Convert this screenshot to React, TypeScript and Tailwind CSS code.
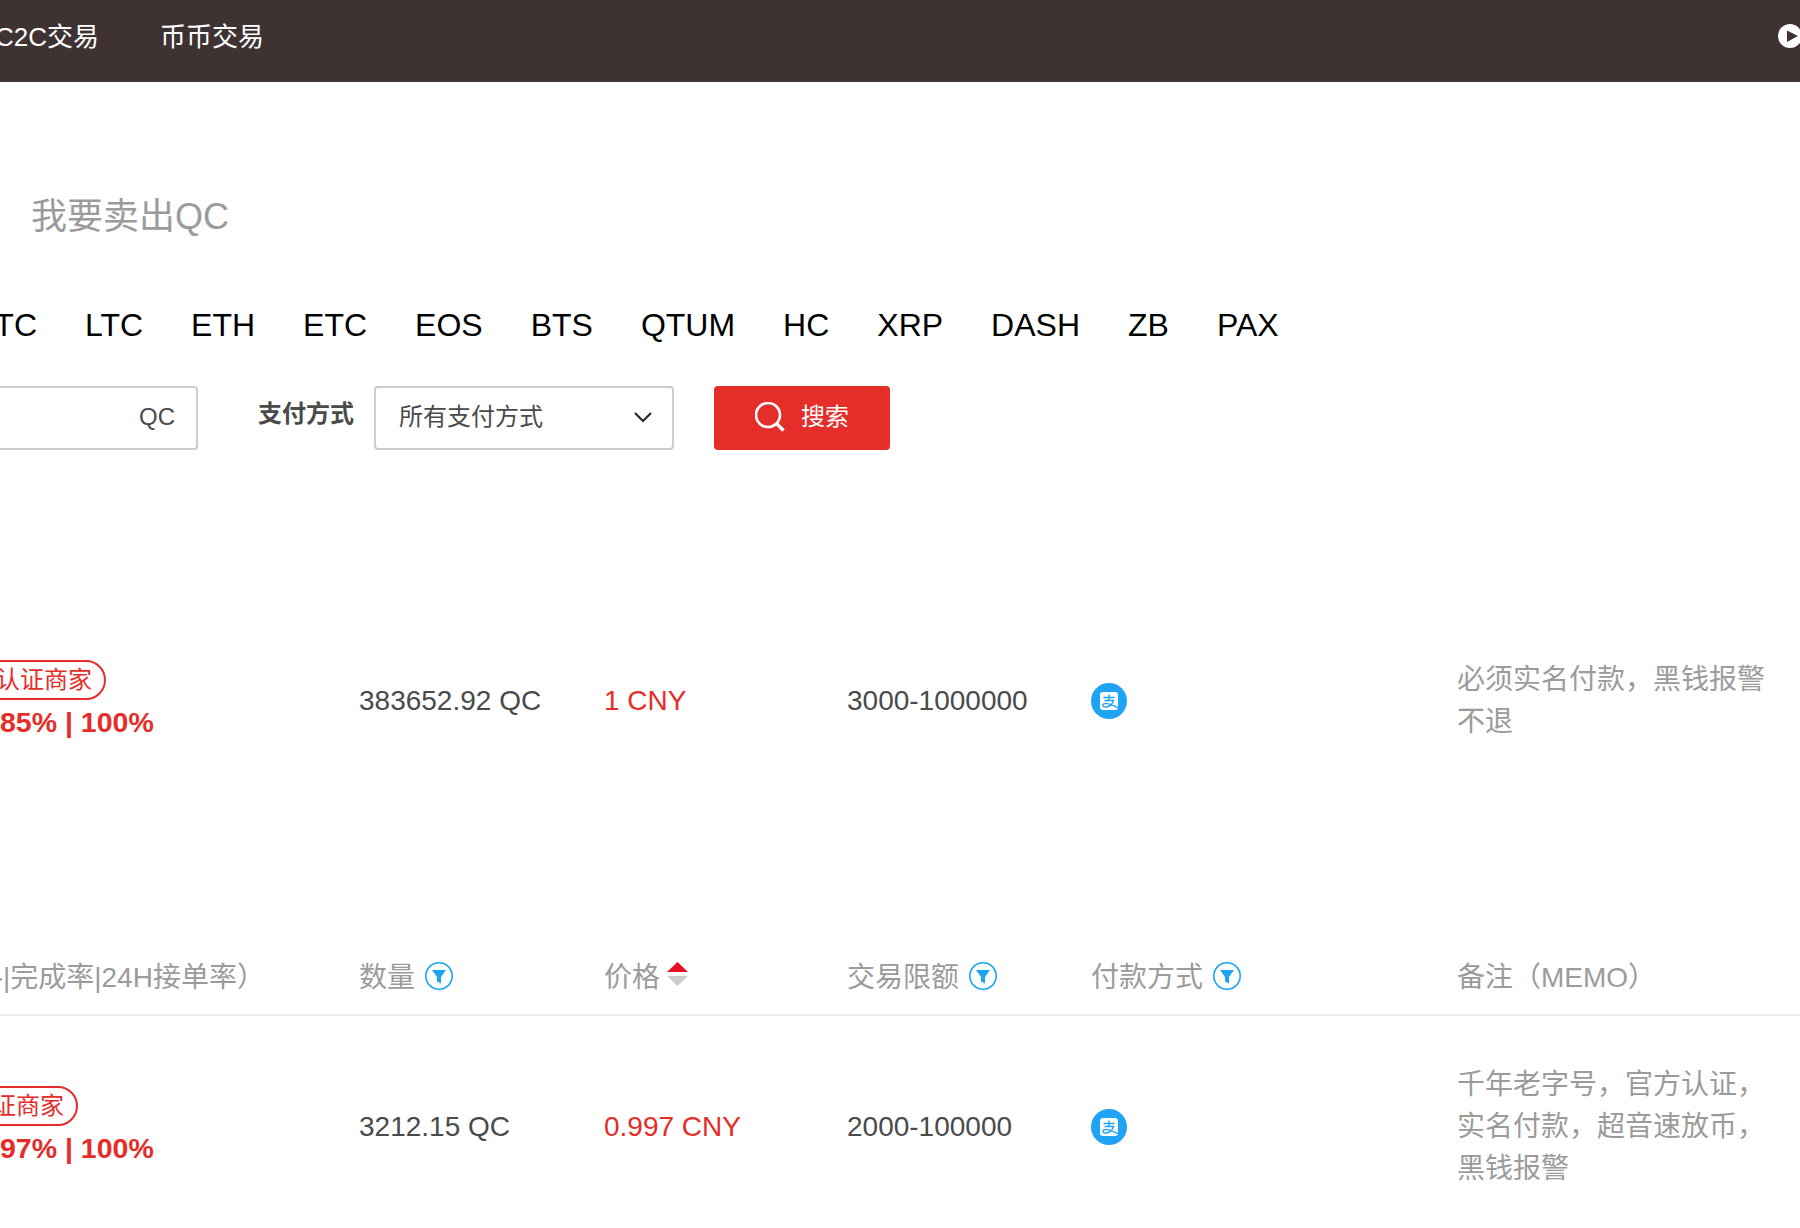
const COINS = ["BTC", "LTC", "ETH", "ETC", "EOS", "BTS", "QTUM", "HC", "XRP", "DASH", "ZB", "PAX"];

const ROW_GRID = "grid grid-cols-[419px_245px_243px_244px_366px_1fr] items-center";

const FilterIcon = () => (
  <svg width="30" height="30" viewBox="0 0 30 30" fill="none" className="shrink-0 -ml-px">
    <circle cx="15" cy="15" r="13.2" stroke="#1fa3f5" strokeWidth="1.6" />
    <path d="M8 9h14l-5 7v6.5l-4-2V16z" fill="#1fa3f5" />
  </svg>
);

const SortIcon = () => (
  <svg width="21" height="25" viewBox="0 0 21 25" className="shrink-0 -ml-px -mt-[3px]">
    <path d="M10.5 0L21 10H0z" fill="#e81123" />
    <path d="M0 14h21L10.5 24z" fill="#cccccc" />
  </svg>
);

const AlipayBadge = () => (
  <svg width="36" height="36" viewBox="0 0 36 36" fill="none">
    <circle cx="18" cy="18" r="18" fill="#1fa3f5" />
    <rect x="9" y="9" width="18" height="18" rx="3" fill="#ffffff" />
    <path d="M12.5 14.5h11M18 11.5v6M13.5 17.5h9c-1 3-4 6-7 6.5-3 .4-4-1-3.5-2.4.6-1.6 5-2.2 15.500 3.400" stroke="#1fa3f5" strokeWidth="1.4" />
  </svg>
);

const Stats: React.FC<{ badgeOffset: string; stat: string }> = ({ badgeOffset, stat }) => (
  <div className="flex flex-col items-start">
    <div className={`${badgeOffset} h-10 pl-4 pr-[12px] border-2 border-[#e52d2a] rounded-full flex items-center text-[24px] text-[#e52d2a] whitespace-nowrap`}>
      认证商家
    </div>
    <div className="ml-[60px] mt-[2px] text-[28.5px] leading-[40px] font-bold text-[#e52d2a] whitespace-nowrap">
      {stat} | 100%
    </div>
  </div>
);

const App: React.FC = () => {
  return (
    <div className="h-[1228px] overflow-hidden bg-white font-['Liberation_Sans','Noto_Sans_CJK_SC',sans-serif]">
      <nav className="h-[82px] bg-[#3e3332] flex items-center justify-between text-white text-[26px] -ml-[5px] -mr-[2px]">
        <div className="flex gap-[61px] pb-2">
          <span>C2C交易</span>
          <span>币币交易</span>
        </div>
        <svg width="24" height="24" viewBox="0 0 24 24" className="mb-[10px]">
          <circle cx="12" cy="12" r="12" fill="#ffffff" />
          <path d="M9 6.500L20 12 9 18z" fill="#3e3332" />
        </svg>
      </nav>

      <main className="-ml-[60px]">
        <h1 className="ml-[91px] mt-[110px] mb-[-2px] text-[36px] leading-[50px] text-[#9b9b9b]">我要卖出QC</h1>

        <div className="ml-[33px] mt-[65px] flex gap-[48px] text-[32px] leading-[40px] text-black">
          {COINS.map((coin) => (
            <span key={coin}>{coin}</span>
          ))}
        </div>

        <div className="mt-[41px] flex items-center">
          <div className="w-[258px] h-16 pb-[2px] border-2 border-[#cccccc] rounded flex items-center justify-end pr-[21px] text-[24px] text-[#4a4a4a]">
            QC
          </div>
          <span className="ml-[60px] mr-[20px] pb-[8px] text-[24px] font-bold text-[#4a4a4a] whitespace-nowrap">支付方式</span>
          <div className="w-[300px] h-16 pb-[2px] border-2 border-[#cccccc] rounded flex items-center justify-between pl-[23px] pr-[19px] text-[24px] text-[#4a4a4a]">
            <span>所有支付方式</span>
            <svg width="20" height="12" viewBox="0 0 20 12" fill="none">
              <path d="M2 2l8 8 8-8" stroke="#222222" strokeWidth="2" />
            </svg>
          </div>
          <button className="ml-[40px] w-[176px] h-16 pb-[2px] rounded bg-[#e52d2a] text-white text-[24px] flex items-center justify-center gap-4">
            <svg width="30" height="30" viewBox="0 0 30 30" fill="none">
              <circle cx="13" cy="13" r="12" stroke="#ffffff" strokeWidth="2.6" />
              <path d="M21.500 21.500l7 7" stroke="#ffffff" strokeWidth="3.400" />
            </svg>
            搜索
          </button>
        </div>

        <div className={`${ROW_GRID} mt-[150px] h-[200px] pt-[2px] text-[28px] text-[#4a4a4a]`}>
          <Stats badgeOffset="ml-[38px]" stat="85%" />
          <span>383652.92 QC</span>
          <span className="text-[#e52d2a]">1 CNY</span>
          <span>3000-1000000</span>
          <AlipayBadge />
          <p className="w-[312px] leading-[42px] text-[#9b9b9b]">必须实名付款，黑钱报警不退</p>
        </div>

        <div className={`${ROW_GRID} mt-[138px] h-[78px] border-b-2 border-[#eeeeee] text-[28px] text-[#9b9b9b]`}>
          <span className="ml-[35px] pt-[4px] whitespace-nowrap">料|完成率|24H接单率）</span>
          <div className="flex items-center gap-[10px]">
            <span className="pt-[4px]">数量</span>
            <FilterIcon />
          </div>
          <div className="flex items-center gap-2">
            <span className="pt-[4px]">价格</span>
            <SortIcon />
          </div>
          <div className="flex items-center gap-[10px]">
            <span className="pt-[4px]">交易限额</span>
            <FilterIcon />
          </div>
          <div className="flex items-center gap-[10px]">
            <span className="pt-[4px]">付款方式</span>
            <FilterIcon />
          </div>
          <span className="pt-[4px]">备注（MEMO）</span>
        </div>

        <div className={`${ROW_GRID} h-[222px] text-[28px] text-[#4a4a4a]`}>
          <Stats badgeOffset="ml-[10px]" stat="97%" />
          <span>3212.15 QC</span>
          <span className="text-[#e52d2a]">0.997 CNY</span>
          <span>2000-100000</span>
          <AlipayBadge />
          <p className="w-[312px] leading-[42px] text-[#9b9b9b]">千年老字号，官方认证，实名付款，超音速放币，黑钱报警</p>
        </div>
      </main>
    </div>
  );
};

export default App;
